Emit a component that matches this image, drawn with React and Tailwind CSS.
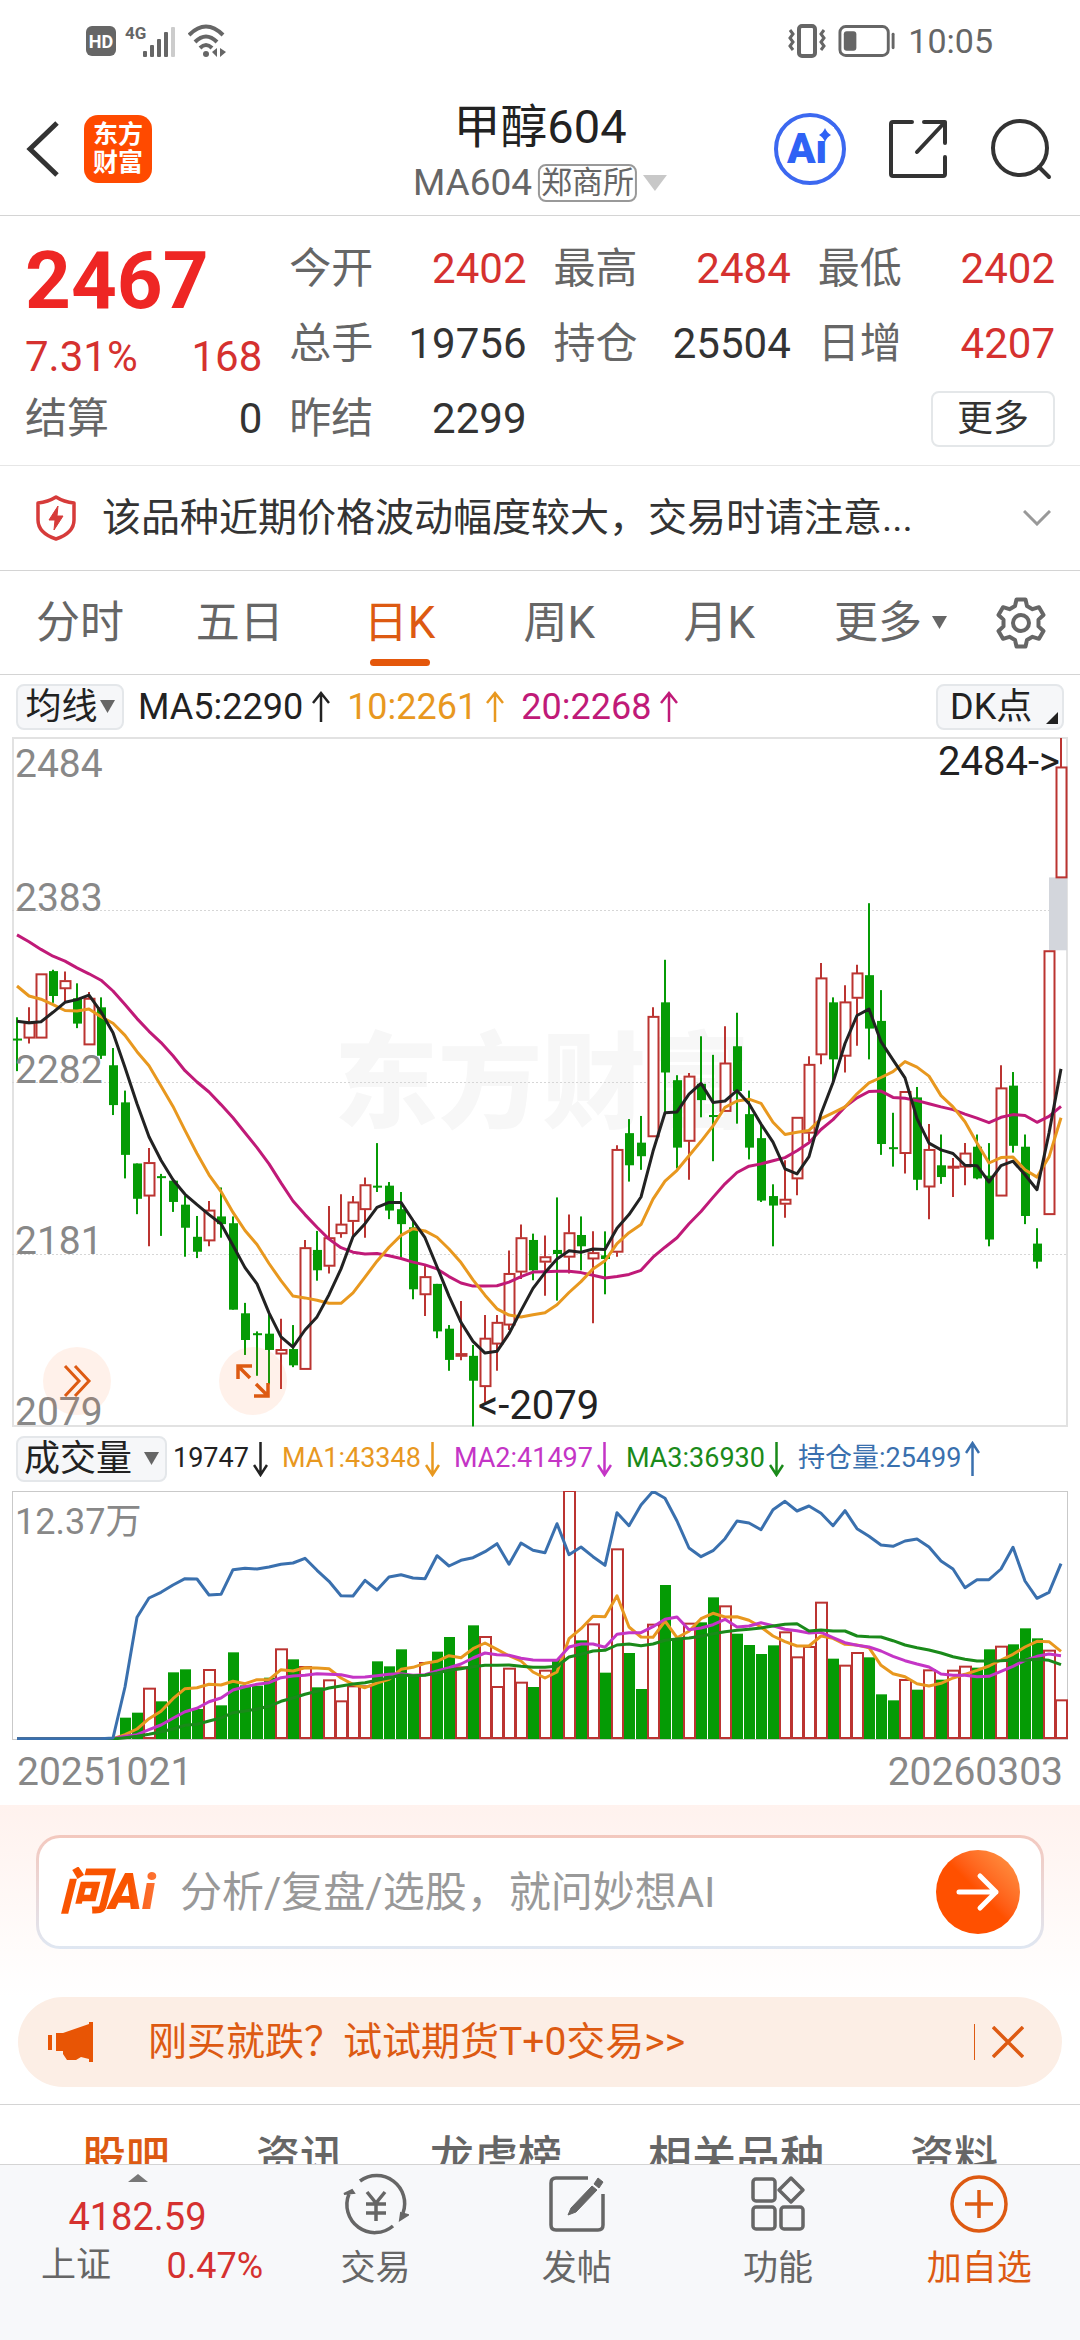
import { useState } from "react";

// [high, body top, body bottom, low, rising] on the price axis below
const CANDLES = [
    [634, 681, 685, 753, 0], [612, 646, 680, 692, 1], [538, 538, 680, 680, 1], [529, 532, 587, 602, 0],
    [533, 553, 571, 600, 1], [559, 592, 648, 658, 0], [578, 592, 695, 695, 1], [590, 612, 719, 726, 0],
    [702, 740, 828, 850, 0], [796, 822, 938, 990, 0], [957, 957, 1035, 1069, 0], [923, 955, 1029, 1140, 1],
    [980, 985, 989, 1117, 0], [990, 995, 1042, 1064, 0], [1028, 1048, 1099, 1163, 0], [1073, 1119, 1152, 1166, 0],
    [1040, 1060, 1128, 1140, 1], [1010, 1074, 1091, 1121, 0], [1074, 1089, 1280, 1280, 0], [1265, 1288, 1347, 1380, 0],
    [1328, 1332, 1336, 1426, 0], [1290, 1333, 1369, 1445, 0], [1300, 1368, 1378, 1455, 1], [1314, 1367, 1403, 1407, 0],
    [1126, 1143, 1412, 1412, 1], [1106, 1148, 1193, 1216, 0], [1051, 1121, 1184, 1200, 1], [1025, 1091, 1112, 1121, 1],
    [1029, 1042, 1085, 1121, 1], [988, 1004, 1059, 1121, 1], [912, 1006, 1009, 1020, 0], [998, 1006, 1061, 1080, 0],
    [1020, 1058, 1091, 1166, 0], [1080, 1098, 1235, 1257, 0], [1180, 1207, 1247, 1294, 1], [1223, 1223, 1328, 1343, 0],
    [1314, 1322, 1391, 1415, 0], [1261, 1377, 1383, 1392, 1], [1358, 1382, 1437, 1538, 0], [1292, 1343, 1450, 1485, 1],
    [1292, 1308, 1356, 1415, 1], [1149, 1200, 1314, 1325, 1], [1092, 1121, 1197, 1212, 1], [1112, 1126, 1193, 1215, 0],
    [1116, 1163, 1175, 1249, 1], [1032, 1148, 1157, 1260, 0], [1070, 1110, 1164, 1200, 1], [1074, 1115, 1140, 1193, 0],
    [1107, 1154, 1168, 1310, 1], [1107, 1160, 1168, 1246, 0], [917, 926, 1153, 1163, 1], [859, 890, 961, 997, 0],
    [852, 911, 941, 971, 0], [612, 632, 898, 898, 1], [507, 601, 756, 850, 0], [762, 773, 922, 968, 0],
    [757, 764, 908, 993, 1], [676, 781, 817, 855, 0], [717, 850, 853, 952, 0], [654, 735, 842, 842, 1],
    [624, 698, 797, 869, 0], [796, 848, 922, 948, 0], [870, 901, 1039, 1042, 0], [1003, 1029, 1050, 1140, 0],
    [950, 1036, 1047, 1077, 1], [855, 855, 991, 1027, 1], [720, 738, 890, 908, 1], [514, 547, 717, 738, 1],
    [590, 601, 727, 780, 0], [563, 600, 720, 756, 1], [518, 536, 592, 697, 1], [382, 541, 659, 727, 0],
    [574, 642, 914, 938, 0], [845, 921, 925, 964, 0], [798, 798, 935, 979, 1], [788, 811, 993, 1016, 0],
    [870, 926, 1009, 1080, 1], [893, 961, 987, 1002, 0], [945, 963, 966, 1031, 1], [912, 934, 965, 1005, 1],
    [893, 920, 990, 992, 0], [912, 984, 1125, 1140, 0], [740, 790, 1029, 1029, 1], [755, 785, 918, 933, 0],
    [893, 920, 1073, 1091, 0], [1100, 1134, 1174, 1189, 0], [487, 487, 1070, 1070, 1], [17, 81, 326, 326, 1],
];

const MA5 = [643, 646, 644, 623, 601, 595, 585, 622, 668, 745, 825, 898, 950, 993, 1025, 1048, 1070, 1090, 1138, 1187, 1223, 1287, 1340, 1363, 1325, 1296, 1247, 1190, 1119, 1090, 1054, 1043, 1043, 1083, 1121, 1185, 1250, 1308, 1350, 1376, 1372, 1333, 1282, 1233, 1198, 1168, 1150, 1153, 1146, 1147, 1100, 1070, 1031, 930, 845, 843, 804, 780, 822, 819, 796, 825, 870, 910, 969, 980, 942, 847, 778, 692, 630, 616, 688, 728, 768, 858, 912, 927, 935, 961, 962, 998, 962, 952, 982, 1015, 890, 748];
const MA10 = [565, 587, 594, 606, 619, 620, 616, 633, 647, 674, 710, 741, 786, 831, 884, 935, 982, 1019, 1065, 1105, 1136, 1178, 1216, 1250, 1254, 1259, 1266, 1266, 1243, 1208, 1173, 1142, 1116, 1101, 1106, 1120, 1146, 1176, 1214, 1248, 1278, 1292, 1296, 1291, 1287, 1269, 1242, 1218, 1190, 1172, 1134, 1110, 1092, 1036, 996, 972, 940, 908, 874, 833, 819, 815, 824, 866, 893, 888, 884, 858, 845, 832, 803, 779, 767, 754, 732, 744, 764, 807, 832, 865, 912, 956, 944, 943, 971, 987, 943, 856];
const MA20 = [452, 467, 484, 499, 510, 525, 538, 552, 576, 606, 637, 665, 690, 719, 752, 777, 799, 827, 856, 889, 922, 958, 1000, 1040, 1070, 1098, 1124, 1143, 1153, 1157, 1156, 1161, 1167, 1175, 1181, 1190, 1207, 1221, 1228, 1228, 1227, 1219, 1207, 1197, 1196, 1195, 1195, 1198, 1204, 1210, 1207, 1202, 1193, 1164, 1142, 1121, 1090, 1063, 1032, 1002, 977, 963, 958, 951, 944, 929, 911, 882, 860, 832, 812, 798, 797, 811, 813, 818, 825, 832, 838, 848, 857, 867, 855, 849, 851, 866, 853, 831];

const VOLUME = [956, 954, 954, 956, 954, 956, 954, 954, 956, 892, 877, 802, 843, 756, 747, 866, 746, 855, 696, 795, 796, 772, 684, 717, 737, 801, 777, 840, 795, 795, 723, 738, 687, 765, 725, 694, 650, 738, 615, 647, 797, 742, 784, 800, 748, 716, 209, 660, 609, 757, 384, 698, 806, 610, 494, 655, 607, 606, 531, 555, 640, 674, 701, 675, 633, 708, 677, 544, 715, 733, 695, 711, 822, 840, 776, 808, 747, 778, 748, 736, 742, 687, 676, 672, 624, 654, 688, 837];
const VOL_MA1 = [955, 955, 955, 955, 955, 955, 955, 955, 955, 943, 926, 895, 873, 835, 805, 802, 792, 794, 783, 790, 778, 778, 748, 752, 742, 743, 745, 773, 792, 802, 788, 777, 747, 741, 729, 723, 706, 712, 685, 668, 687, 706, 722, 755, 773, 755, 655, 625, 588, 589, 526, 620, 650, 651, 602, 652, 633, 595, 579, 590, 589, 600, 620, 647, 664, 677, 677, 647, 654, 672, 674, 682, 735, 760, 769, 790, 797, 789, 773, 762, 750, 737, 719, 702, 680, 663, 664, 693];
const VOL_MA2 = [955, 955, 955, 955, 955, 955, 955, 955, 955, 948, 943, 928, 914, 894, 874, 864, 844, 833, 809, 799, 792, 787, 772, 767, 765, 760, 762, 763, 771, 770, 766, 762, 760, 765, 763, 752, 742, 731, 713, 698, 703, 705, 714, 719, 720, 720, 680, 671, 671, 681, 642, 637, 637, 619, 597, 590, 628, 623, 613, 597, 620, 617, 607, 616, 627, 631, 638, 636, 652, 667, 675, 680, 692, 708, 721, 731, 740, 761, 765, 765, 769, 768, 753, 738, 720, 708, 701, 706];
const VOL_MA3 = [956, 956, 956, 956, 956, 956, 956, 956, 956, 952, 948, 942, 934, 926, 915, 912, 902, 893, 877, 872, 866, 858, 843, 833, 822, 813, 803, 797, 791, 787, 780, 773, 764, 766, 765, 758, 750, 745, 739, 735, 735, 734, 738, 741, 741, 738, 710, 702, 692, 690, 674, 671, 676, 671, 660, 656, 653, 648, 640, 634, 630, 627, 623, 617, 612, 610, 632, 629, 632, 632, 647, 649, 650, 661, 674, 682, 689, 698, 709, 717, 722, 722, 721, 719, 720, 717, 720, 733];
const HOLDINGS = [955, 955, 955, 955, 955, 955, 955, 955, 953, 800, 591, 533, 516, 494, 475, 476, 524, 522, 448, 444, 446, 440, 432, 428, 414, 450, 483, 526, 527, 480, 509, 470, 463, 473, 475, 406, 437, 420, 412, 394, 370, 432, 368, 390, 397, 310, 403, 380, 409, 435, 277, 316, 254, 213, 234, 302, 383, 409, 391, 355, 302, 308, 328, 268, 243, 272, 257, 279, 316, 271, 325, 348, 374, 378, 362, 356, 380, 422, 446, 502, 478, 478, 446, 381, 482, 534, 516, 430];

const RED = "#bb3431";
const GREEN = "#059b05";

const quotes = [
    ["今开", "2402", true], ["最高", "2484", true], ["最低", "2402", true],
    ["总手", "19756", false], ["持仓", "25504", false], ["日增", "4207", true],
];
const periods = ["分时", "五日", "日K", "周K", "月K"];

const x = (i) => 5 + 12 * i;
// both axes run downwards, first number is the top edge of the plot
const priceY = (v) => ((v - 17) * 688) / 1520;
const volY = (v) => (v - 212) / 3;

function Line({ data, scale, color, width = 3 }) {
    return (
        <polyline
            points={data.map((v, i) => `${x(i)},${scale(v).toFixed(1)}`).join(" ")}
            fill="none"
            stroke={color}
            strokeWidth={width}
            strokeLinejoin="round"
        />
    );
}

function PriceChart() {
    return (
        <svg viewBox="0 0 1056 688" className="block w-full h-auto overflow-visible">
            <text x="322" y="382" fontSize="104" fontWeight="900" fill="#f7f7f7">东方财富</text>
            <rect x="1" y="0" width="1054" height="688" fill="none" stroke="#e2e2e2" strokeWidth="2" />
            {[172, 344, 516].map((y) => (
                <line key={y} x1="0" x2="1056" y1={y + 0.5} y2={y + 0.5} stroke="#d6d6d6" strokeDasharray="2 2" />
            ))}
            <rect x="1037" y={priceY(325)} width="18" height={priceY(486) - priceY(325)} fill="#d3d6dc" />
            {CANDLES.map(([hi, top, bot, lo, up], i) => {
                const cx = x(i);
                const t = priceY(top);
                const h = Math.max(priceY(bot) - t, 2);
                return up ? (
                    <g key={i} stroke={RED} strokeWidth="2" fill="#fff">
                        <line x1={cx} x2={cx} y1={priceY(hi)} y2={t} />
                        <line x1={cx} x2={cx} y1={t + h} y2={priceY(lo)} />
                        <rect x={cx - 4.5} y={t + 0.5} width="10" height={Math.max(h - 1, 1)} />
                    </g>
                ) : (
                    <g key={i} fill={GREEN}>
                        <rect x={cx - 1} y={priceY(hi)} width="2" height={priceY(lo) - priceY(hi)} />
                        <rect x={cx - 4} y={t} width="9" height={h} />
                    </g>
                );
            })}
            <Line data={MA20} scale={priceY} color="#c01a78" />
            <Line data={MA10} scale={priceY} color="#e8981f" />
            <Line data={MA5} scale={priceY} color="#222" />
            <g fontSize="39" fill="#888">
                <text x="3" y="39">2484</text>
                <text x="3" y="173">2383</text>
                <text x="3" y="345">2282</text>
                <text x="3" y="516">2181</text>
                <text x="3" y="687">2079</text>
            </g>
            <g fontSize="40" fill="#222">
                <text x="1048" y="37" textAnchor="end">2484-&gt;</text>
                <text x="466" y="681">&lt;-2079</text>
            </g>
        </svg>
    );
}

function VolumeChart() {
    return (
        <svg viewBox="0 0 1056 249" className="block w-full h-auto">
            <rect x="0.5" y="0.5" width="1055" height="248" fill="none" stroke="#c9c9c9" />
            {VOLUME.map((v, i) => {
                const t = volY(v);
                return CANDLES[i][4] ? (
                    <rect key={i} x={x(i) - 5} y={t + 1} width="11" height={Math.max(246 - t, 0.5)} fill="#fff" stroke={RED} strokeWidth="2" />
                ) : (
                    <rect key={i} x={x(i) - 5} y={t} width="11" height={248 - t} fill={GREEN} />
                );
            })}
            <Line data={VOL_MA1} scale={volY} color="#e8981f" />
            <Line data={VOL_MA2} scale={volY} color="#c435c6" />
            <Line data={VOL_MA3} scale={volY} color="#1a8a1a" />
            <Line data={HOLDINGS} scale={volY} color="#3a70ae" />
            <text x="3" y="43" fontSize="36" fill="#888">12.37万</text>
        </svg>
    );
}

function StatusBar() {
    return (
        <div className="h-[82px] flex items-center justify-between pl-[86px] pr-[87px] text-[#666]">
            <div className="flex items-center gap-2">
                <span className="w-[30px] h-[30px] rounded-md bg-[#666] text-white text-[18px] font-bold flex items-center justify-center">HD</span>
                <svg width="56" height="34" viewBox="0 0 56 34" fill="currentColor">
                    <text x="1" y="15" fontSize="17" fontWeight="700">4G</text>
                    <rect x="19" y="27" width="4" height="6" rx="1" />
                    <rect x="26" y="21" width="4" height="12" rx="1" />
                    <rect x="33" y="15" width="4" height="18" rx="1" />
                    <rect x="40" y="8" width="4" height="25" rx="1" />
                    <rect x="47" y="3" width="4" height="30" rx="1" fill="#ccc" />
                </svg>
                <svg width="40" height="34" viewBox="0 0 40 34" fill="none" stroke="currentColor" strokeWidth="4">
                    <path d="M1 11 Q18 -6 35 11" />
                    <path d="M7 18 Q18 7 29 18" />
                    <path d="M12 24 Q18 18 24 24" />
                    <circle cx="18" cy="30" r="3" fill="currentColor" stroke="none" />
                    <path d="M29 24v9l-5-5zM32 24v9l6-5z" fill="currentColor" stroke="none" />
                </svg>
            </div>
            <div className="flex items-center gap-3">
                <svg width="38" height="34" viewBox="0 0 38 34" fill="none" stroke="currentColor" strokeWidth="4">
                    <rect x="11" y="2" width="16" height="30" rx="3" />
                    <path d="M2 6l3 4-3 4 3 4-3 4 3 4M36 6l-3 4 3 4-3 4 3 4-3 4" strokeWidth="3" />
                </svg>
                <svg width="58" height="34" viewBox="0 0 60 34" fill="none" stroke="currentColor" strokeWidth="3">
                    <rect x="2" y="2" width="50" height="30" rx="6" />
                    <rect x="6" y="7" width="13" height="20" rx="3" fill="currentColor" stroke="none" />
                    <path d="M57 10v14" strokeLinecap="round" />
                </svg>
                <span className="text-[34px] leading-none">10:05</span>
            </div>
        </div>
    );
}

function Header() {
    return (
        <header className="h-[134px] flex items-center justify-between pl-[26px] pr-[28px] border-b border-[#d4d4d4] relative">
            <div className="flex items-center gap-6">
                <button aria-label="返回">
                    <svg width="34" height="56" viewBox="0 0 34 56" fill="none" stroke="#333" strokeWidth="5">
                        <path d="M31 2 4 28l27 26" />
                    </svg>
                </button>
                <div className="w-[68px] h-[68px] rounded-[14px] bg-[#ff4a00] text-white text-[25px] leading-7 font-bold flex flex-col items-center justify-center">
                    <span>东方</span>
                    <span>财富</span>
                </div>
            </div>
            <div className="absolute left-1/2 -translate-x-1/2 pt-2 flex flex-col items-center">
                <h1 className="text-[47px] leading-[60px] text-[#222]">甲醇604</h1>
                <button className="flex items-center gap-[6px] text-[#666] text-[37px] leading-[52px]">
                    MA604
                    <span className="border-2 border-[#999] rounded-lg px-px text-[31px] leading-[34px]">郑商所</span>
                    <svg width="24" height="16" viewBox="0 0 24 16"><path d="M0 0h24L12 16z" fill="#c8c8c8" /></svg>
                </button>
            </div>
            <div className="flex items-center gap-[42px]">
                <button aria-label="Ai">
                    <svg width="72" height="72" viewBox="0 0 72 72">
                        <circle cx="36" cy="36" r="34" fill="#fff" stroke="#3c68f0" strokeWidth="4" />
                        <text x="13" y="50" fontSize="42" fontWeight="900" fill="#2f62f5">Ai</text>
                        <rect x="42" y="14" width="18" height="14" fill="#fff" />
                        <path d="M51 15q2 5 6 7-4 2-6 7-2-5-6-7 4-2 6-7z" fill="#2f62f5" />
                    </svg>
                </button>
                <button aria-label="分享">
                    <svg width="60" height="60" viewBox="0 0 60 60" fill="none" stroke="#333" strokeWidth="4" strokeLinejoin="round" strokeLinecap="round">
                        <path d="M24 3H5q-2 0-2 2v50q0 2 2 2h50q2 0 2-2V38" />
                        <path d="M36 3h21v21M57 3 29 33" />
                    </svg>
                </button>
                <button aria-label="搜索">
                    <svg width="62" height="62" viewBox="0 0 62 62" fill="none" stroke="#333" strokeWidth="4" strokeLinecap="round">
                        <circle cx="30" cy="30" r="27" />
                        <path d="m49 49 10 10" />
                    </svg>
                </button>
            </div>
        </header>
    );
}

function Quote({ label, value, up }) {
    return (
        <div className="h-[75px] flex items-center justify-between">
            <span className="text-[#666]">{label}</span>
            <span className={up ? "text-[#d5312f]" : "text-[#333]"}>{value}</span>
        </div>
    );
}

function Quotes() {
    return (
        <section className="grid grid-cols-4 gap-x-[27px] px-[25px] pt-[15px] pb-[9px] text-[42px] border-b border-[#e6e6e6]">
            <div className="row-span-2 text-[#d5312f]">
                <div className="h-[100px] flex items-center text-[80px] font-bold text-[#ee2624]">2467</div>
                <div className="h-[50px] flex items-center justify-between">
                    <span>7.31%</span>
                    <span>168</span>
                </div>
            </div>
            {quotes.map(([label, value, up]) => (
                <Quote key={label} label={label} value={value} up={up} />
            ))}
            <Quote label="结算" value="0" />
            <Quote label="昨结" value="2299" />
            <div className="col-span-2 flex items-center justify-end">
                <button className="border-2 border-[#e4e7e9] rounded-lg w-[124px] h-14 text-[36px] leading-none text-[#333]">更多</button>
            </div>
        </section>
    );
}

function Trend({ label, dir, color, narrow }) {
    return (
        <span className={"flex items-center whitespace-nowrap " + color}>
            {label}
            <svg width={narrow ? 15 : 20} height={narrow ? 36 : 32} viewBox={narrow ? "0 0 15 36" : "0 0 20 32"} className={narrow ? "ml-1" : "ml-2"} fill="none" stroke="currentColor" strokeWidth="2.5">
                {narrow
                    ? <path d={dir === "up" ? "M7.5 35V2M1 12l6.5-10L14 12" : "M7.5 1v33M1 24l6.5 10L14 24"} />
                    : <path d="M10 31V2M2 12l8-10 8 10" />}
            </svg>
        </span>
    );
}

function Caret({ className }) {
    return (
        <svg width="15" height="13" viewBox="0 0 15 13" className={className}>
            <path d="M0 0h15L7.5 13z" fill="#666" />
        </svg>
    );
}

export default function App() {
    const [period, setPeriod] = useState("日K");
    const [showBanner, setShowBanner] = useState(true);

    return (
        <div className="h-screen flex flex-col bg-white font-[Roboto,'Noto_Sans_CJK_SC',sans-serif]">
            <StatusBar />
            <Header />
            <main className="flex-1 min-h-0 overflow-hidden">
                <Quotes />

                <button className="w-full h-[105px] flex items-center pl-[35px] pr-[29px] text-left border-b border-[#d4d4d4]">
                    <svg width="42" height="46" viewBox="0 0 42 46" fill="none" stroke="#d63b3a" strokeWidth="3.5" strokeLinejoin="round">
                        <path d="M21 2q8 5 18 6v17q0 13-18 19Q3 38 3 25V8q10-1 18-6z" />
                        <path d="M23 11 14 25h6l-1 10 9-14h-6z" fill="#d63b3a" strokeWidth="1" />
                    </svg>
                    <span className="flex-1 ml-[25px] text-[39px] text-[#333] whitespace-nowrap">该品种近期价格波动幅度较大，交易时请注意...</span>
                    <svg width="28" height="16" viewBox="0 0 28 16" fill="none" stroke="#999" strokeWidth="3">
                        <path d="m1 1 13 13L27 1" />
                    </svg>
                </button>

                <nav className="h-[104px] flex border-b border-[#d4d4d4] text-[44px] text-[#666]">
                    {periods.map((p) => (
                        <button
                            key={p}
                            onClick={() => setPeriod(p)}
                            className={"w-[14.8%] relative " + (p === period ? "text-[#dd5a12]" : "")}
                        >
                            {p}
                            {p === period && <span className="absolute left-1/2 -translate-x-1/2 bottom-2 w-[60px] h-[7px] rounded-full bg-[#e4570b]" />}
                        </button>
                    ))}
                    <button className="flex-1 flex items-center justify-center gap-[10px]">
                        更多
                        <Caret />
                    </button>
                    <button aria-label="设置" className="w-[98px] pr-5 flex items-center justify-center">
                        <svg width="54" height="54" viewBox="0 0 54 54" fill="none" stroke="#666" strokeWidth="4" strokeLinejoin="round">
                            <path d="M22.5 3.5h9l1.5 6.500 5.500 3.200 6.500-2 4.500 7.800-5 4.600v6.800l5 4.600-4.500 7.800-6.500-2-5.500 3.200-1.500 6.500h-9l-1.500-6.500-5.500-3.200-6.500 2-4.500-7.800 5-4.600v-6.800l-5-4.600 4.500-7.800 6.500 2 5.500-3.200z" />
                            <circle cx="27" cy="27" r="8" />
                        </svg>
                    </button>
                </nav>

                <div className="h-[63px] px-4 flex items-center text-[36px]">
                    <button className="h-[46px] w-[108px] flex items-center justify-center gap-[2px] rounded-lg border-2 border-[#e4e7ea] bg-[#f6f7f9] text-[#222]">
                        均线
                        <Caret />
                    </button>
                    <div className="ml-[14px] flex gap-4">
                        <Trend label="MA5:2290" dir="up" color="text-[#222]" />
                        <Trend label="10:2261" dir="up" color="text-[#e8981f]" />
                        <Trend label="20:2268" dir="up" color="text-[#c01a78]" />
                    </div>
                    <button className="ml-auto h-[46px] w-[128px] pl-3 pr-1 flex items-center justify-between rounded-lg border-2 border-[#e4e7ea] bg-[#f6f7f9] text-[#222]">
                        DK点
                        <svg width="12" height="12" viewBox="0 0 12 12" className="self-end mb-1"><path d="M12 0v12H0z" fill="#222" /></svg>
                    </button>
                </div>

                <div className="px-3 relative">
                    <PriceChart />
                    <button aria-label="展开" className="absolute left-[43px] bottom-[11px] w-[68px] h-[68px] rounded-full bg-[#fb7634]/10 flex items-center justify-center">
                        <svg width="30" height="34" viewBox="0 0 30 34" fill="none" stroke="#dd5a12" strokeWidth="3">
                            <path d="m3 2 14 15L3 32M13 2l14 15-14 15" />
                        </svg>
                    </button>
                    <button aria-label="全屏" className="absolute left-[219px] bottom-[11px] w-[68px] h-[68px] rounded-full bg-[#fb7634]/10 flex items-center justify-center">
                        <svg width="34" height="34" viewBox="0 0 34 34" fill="none" stroke="#dd5a12" strokeWidth="3.5">
                            <path d="M2 15V2h14M2 2l12 12M32 19v13H18M32 32 20 20" />
                        </svg>
                    </button>
                </div>

                <div className="h-[65px] pl-4 flex items-center">
                    <button className="h-[46px] w-[151px] shrink-0 flex items-center justify-center gap-3 rounded-lg border-2 border-[#e4e7ea] bg-[#f6f7f9] text-[36px] text-[#222] whitespace-nowrap">
                        成交量
                        <Caret />
                    </button>
                    <div className="ml-[6px] flex gap-[14px] text-[27px]">
                        <Trend narrow label="19747" dir="down" color="text-[#222]" />
                        <Trend narrow label="MA1:43348" dir="down" color="text-[#e8981f]" />
                        <Trend narrow label="MA2:41497" dir="down" color="text-[#c435c6]" />
                        <Trend narrow label="MA3:36930" dir="down" color="text-[#1a8a1a]" />
                        <Trend narrow label="持仓量:25499" dir="up" color="text-[#3a70ae]" />
                    </div>
                </div>

                <div className="px-3">
                    <VolumeChart />
                    <div className="h-[65px] px-[5px] flex items-center justify-between text-[39px] text-[#888]">
                        <span>20251021</span>
                        <span>20260303</span>
                    </div>
                </div>

                <section className="px-9 pt-[30px] pb-12 bg-linear-to-b from-[#fff2ee] to-white">
                    <div className="p-[3px] rounded-3xl bg-linear-to-b from-[#f3c8be] to-[#dfe7f2]">
                        <form className="h-[108px] pl-5 pr-[21px] rounded-[21px] bg-white flex items-center" onSubmit={(e) => e.preventDefault()}>
                            <label htmlFor="ask" className="w-[121px] shrink-0 text-[50px] leading-none font-black italic whitespace-nowrap bg-linear-to-r from-[#f95400] from-60% to-[#ff9050] bg-clip-text text-transparent">问Ai</label>
                            <input
                                id="ask"
                                className="flex-1 min-w-0 text-[42px] outline-none placeholder:text-[#999]"
                                placeholder="分析/复盘/选股，就问妙想AI"
                            />
                            <button aria-label="提问" className="w-[84px] h-[84px] rounded-full bg-linear-to-tr from-[#ff5000] from-50% to-[#ff9a48] flex items-center justify-center">
                                <svg width="44" height="40" viewBox="0 0 44 40" fill="none" stroke="#fff" strokeWidth="5" strokeLinecap="round" strokeLinejoin="round">
                                    <path d="M3 20h37M24 4l16 16-16 16" />
                                </svg>
                            </button>
                        </form>
                    </div>
                </section>

                {showBanner && (
                    <div className="mx-[18px] h-[90px] pl-[30px] pr-[38px] rounded-full bg-[#fceee5] flex items-center text-[#dd5a12]">
                        <svg width="46" height="40" viewBox="0 0 46 40" fill="#e85505">
                            <path d="M0 13h4v15H0zM8 11h7L41 2V0h4v40h-4v-3l-8-2-5 3h-9l-4-6v-3H8z" />
                        </svg>
                        <a href="#t0" className="ml-[54px] flex-1 text-[39px] whitespace-nowrap">刚买就跌？试试期货T+0交易&gt;&gt;</a>
                        <span className="w-px h-9 bg-[#dd5a12]" />
                        <button aria-label="关闭" className="ml-[17px]" onClick={() => setShowBanner(false)}>
                            <svg width="32" height="32" viewBox="0 0 32 32" fill="none" stroke="currentColor" strokeWidth="3.5">
                                <path d="m1 1 30 30M31 1 1 31" />
                            </svg>
                        </button>
                    </div>
                )}

                <nav className="mt-[17px] pt-5 border-t border-[#d4d4d4] flex justify-center gap-[86px] text-[44px] text-[#666] font-medium whitespace-nowrap">
                    <button className="text-[#dd5a12]">股吧</button>
                    <button>资讯</button>
                    <button>龙虎榜</button>
                    <button>相关品种</button>
                    <button>资料</button>
                </nav>
            </main>

            <footer className="h-44 shrink-0 flex bg-[#f7f8fa] border-t border-[#d4d4d4] text-[35px] text-[#666]">
                <button className="w-[275px] pt-[9px] flex flex-col items-center">
                    <svg width="20" height="8" viewBox="0 0 20 8"><path d="M10 0 20 8H0z" fill="#777" /></svg>
                    <span className="mt-3 text-[38px] leading-[46px] text-[#d5312f]">4182.59</span>
                    <span className="w-full pl-[41px] pr-3 leading-[52px] flex justify-between">
                        上证 <span className="text-[36px] text-[#d5312f]">0.47%</span>
                    </span>
                </button>
                <button className="flex-1 pt-[8px] flex flex-col items-center gap-2">
                    <svg width="66" height="62" viewBox="0 0 66 62" fill="none" stroke="currentColor" strokeWidth="3.5">
                        <path d="M17 8A28 28 0 0 1 60 40M50 53A28 28 0 0 1 6 21" />
                        <path d="m1 21 8-4 2 3zM65 42l-8 5 1-7z" fill="currentColor" strokeWidth="2" />
                        <path d="m24 19 9 11 9-11M33 30v18M23 31h20M23 40h20" />
                    </svg>
                    交易
                </button>
                <button className="flex-1 pt-[8px] flex flex-col items-center gap-2">
                    <svg width="62" height="62" viewBox="0 0 62 62" fill="none" stroke="currentColor" strokeWidth="3.5">
                        <path d="M42 5H10q-5 0-5 5v42q0 5 5 5h42q5 0 5-5V21" />
                        <path d="M52 5 57 9 53 15 48 11zM46 13l5 4-21 22-8 3 3-7z" fill="currentColor" strokeWidth="1" />
                    </svg>
                    发帖
                </button>
                <button className="flex-1 pt-[8px] flex flex-col items-center gap-2">
                    <svg width="62" height="62" viewBox="0 0 62 62" fill="none" stroke="currentColor" strokeWidth="3.5" strokeLinejoin="round">
                        <rect x="6" y="6" width="22" height="22" rx="3" />
                        <path d="m44 5 12 12-12 12-12-12z" />
                        <rect x="6" y="34" width="22" height="22" rx="3" />
                        <rect x="34" y="34" width="22" height="22" rx="3" />
                    </svg>
                    功能
                </button>
                <button className="flex-1 pt-[8px] flex flex-col items-center gap-2 text-[#dd5a12]">
                    <svg width="62" height="62" viewBox="0 0 62 62" fill="none" stroke="currentColor" strokeWidth="3.5">
                        <circle cx="31" cy="31" r="27" />
                        <path d="M31 17v28M17 31h28" />
                    </svg>
                    加自选
                </button>
            </footer>
        </div>
    );
}
